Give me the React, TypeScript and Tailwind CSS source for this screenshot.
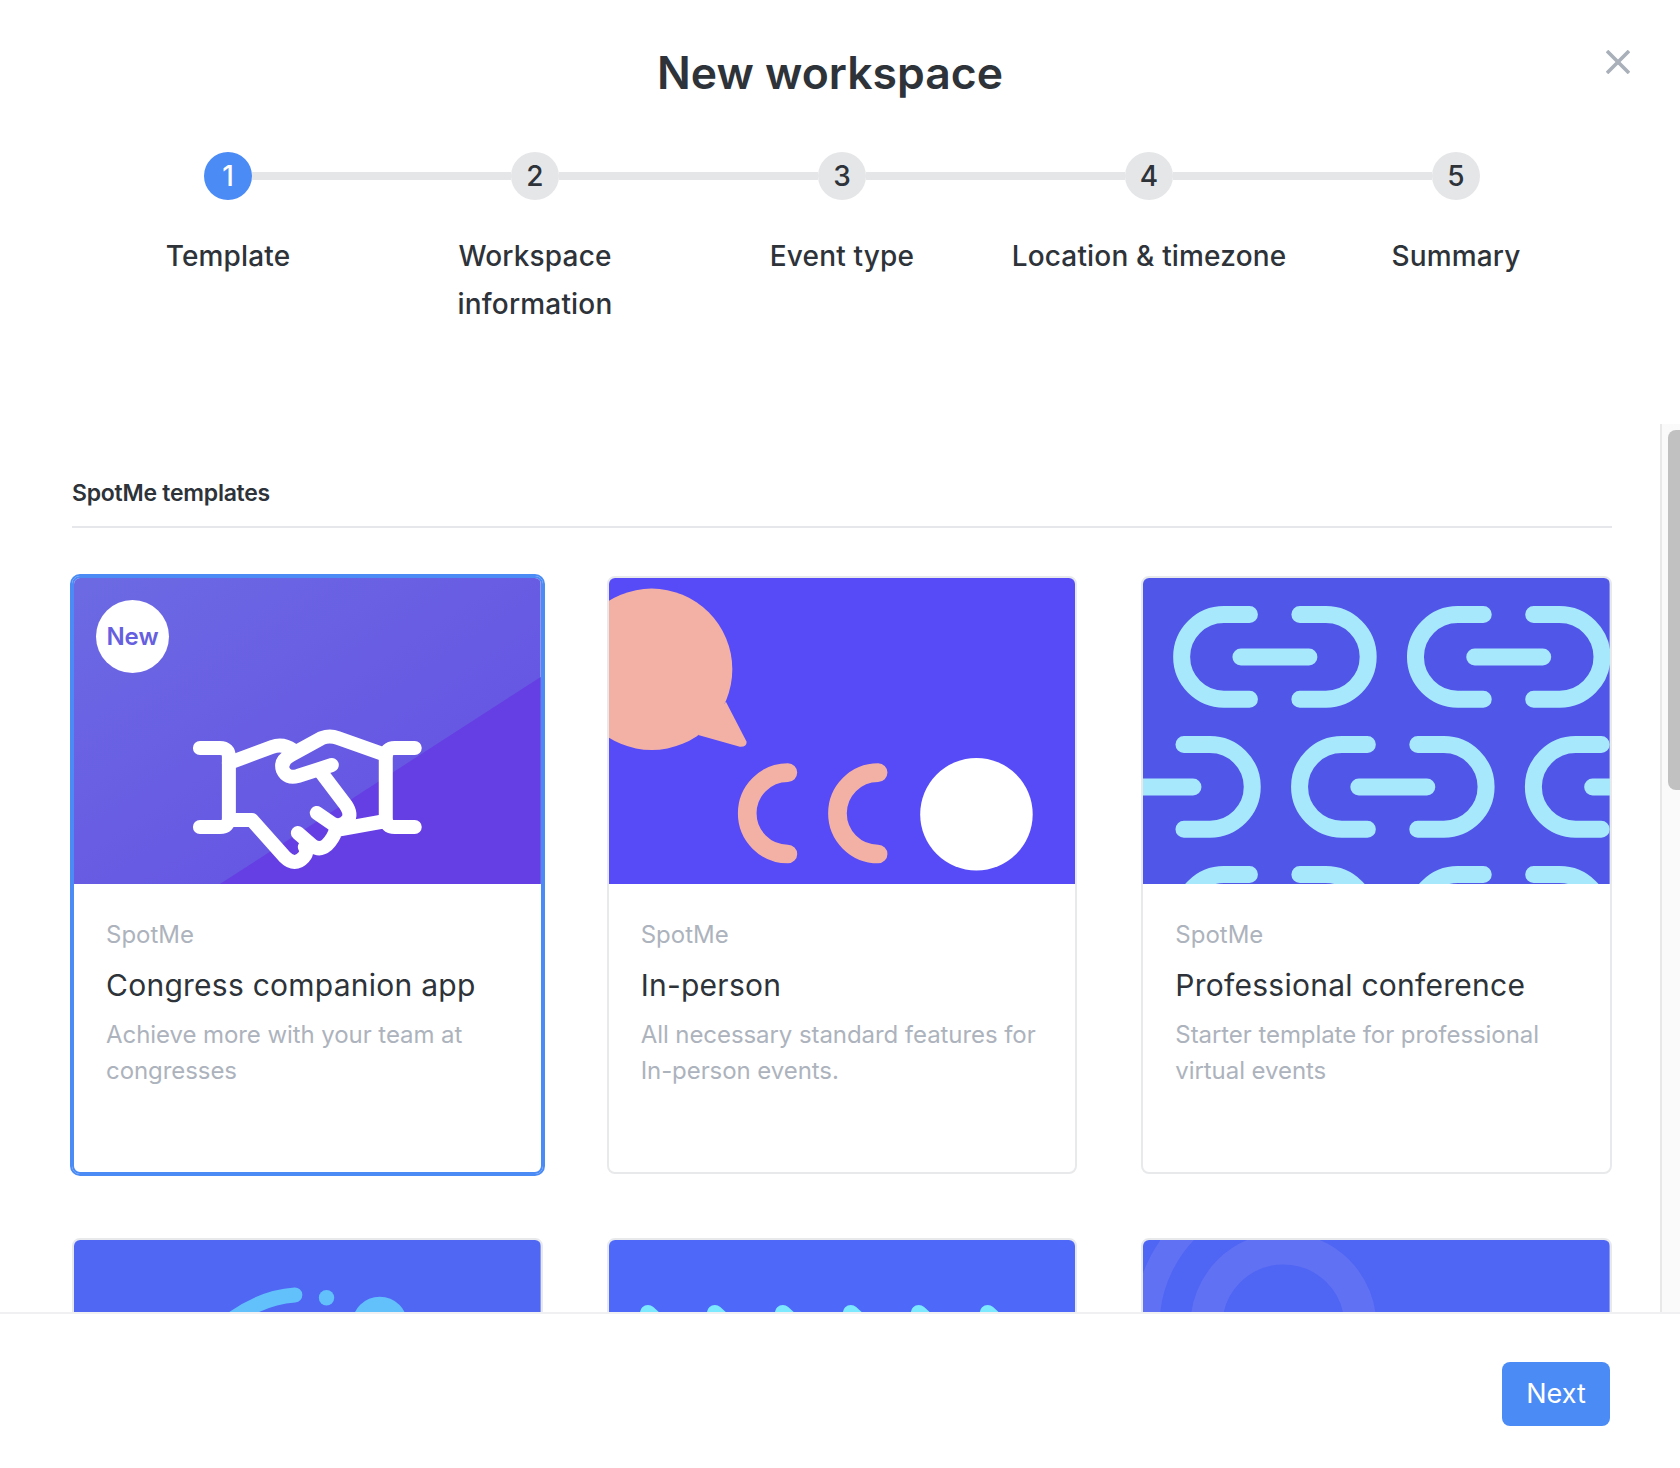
import type { ReactNode } from 'react';

const steps = [
  { n: 1, label: 'Template' },
  { n: 2, label: 'Workspace information' },
  { n: 3, label: 'Event type' },
  { n: 4, label: 'Location & timezone' },
  { n: 5, label: 'Summary' },
];

function Art({ children }: { children: ReactNode }) {
  return (
    <svg viewBox="0 0 467 306" className="block h-[306px] w-full" preserveAspectRatio="none">
      {children}
    </svg>
  );
}

function HandshakeArt() {
  return (
    <Art>
      <defs>
        <linearGradient id="hs" x1="0" y1="0" x2="1" y2="1">
          <stop offset="0" stopColor="#6c6ae3" />
          <stop offset="0.6" stopColor="#6759e3" />
          <stop offset="1" stopColor="#6652e2" />
        </linearGradient>
      </defs>
      <rect width="467" height="306" fill="url(#hs)" />
      <polygon points="146,306 467,99 467,306" fill="#653fe3" />
      <g transform="translate(106 132)" fill="none" stroke="#fff" strokeWidth="14" strokeLinecap="round" strokeLinejoin="round">
        <path d="M20 38H40Q49 38 49 47V108Q49 117 40 117H20" />
        <path d="M235 38H215Q206 38 206 47V108Q206 117 215 117H235" />
        <path d="M49 53L92 37Q103 33 113 40" />
        <path d="M206 45L158 28Q150 25 142 28L111 45Q100 51 103 60Q107 69 118 66L152 55" />
        <path d="M141 62L166 95Q172 104 168 110Q162 118 153 114L137 103" />
        <path d="M49 110H72L105 147Q115 157 124 147Q128 142 125 137" />
        <path d="M118 123L133 136Q140 141 147 135Q154 128 156 120L206 111" />
      </g>
    </Art>
  );
}

function BubbleArt() {
  return (
    <Art>
      <rect width="467" height="306" fill="#564bf6" />
      <circle cx="42.7" cy="91.3" r="80.7" fill="#f3b1a6" />
      <path d="M117 123.7L137.7 163.7Q138 169 131 168.7L89.3 157Z" fill="#f3b1a6" />
      <g fill="none" stroke="#f3b1a6" strokeWidth="18.7" strokeLinecap="round">
        <path d="M179 194.6A40.7 40.7 0 0 0 179 276" />
        <path d="M269.3 194.6A40.7 40.7 0 0 0 269.3 276" />
      </g>
      <circle cx="367.7" cy="236.3" r="56.3" fill="#fff" />
    </Art>
  );
}

function ChainLink({ x, y }: { x: number; y: number }) {
  return (
    <g transform={`translate(${x} ${y})`}>
      <path d="M106.5 36.5H81A42.3 42.3 0 0 0 81 121.2H106.5" />
      <path d="M157 36.5H183A42.3 42.3 0 0 1 183 121.2H157" />
      <path d="M98 79H166" />
    </g>
  );
}

function ChainArt() {
  return (
    <Art>
      <rect width="467" height="306" fill="#5057e8" />
      <g fill="none" stroke="#a8e8fd" strokeWidth="17" strokeLinecap="round">
        <ChainLink x={0} y={0} />
        <ChainLink x={234} y={0} />
        <ChainLink x={-116} y={130} />
        <ChainLink x={118} y={130} />
        <ChainLink x={352} y={130} />
        <ChainLink x={0} y={260} />
        <ChainLink x={234} y={260} />
      </g>
    </Art>
  );
}

function PlanetArt() {
  return (
    <Art>
      <rect width="467" height="306" fill="#4f67f3" />
      <path d="M221 55Q190 57 160 78L140 100" fill="none" stroke="#62c1fb" strokeWidth="15" strokeLinecap="round" strokeLinejoin="round" />
      <circle cx="252.7" cy="57.7" r="7.7" fill="#62c1fb" />
      <circle cx="306" cy="84.4" r="27.7" fill="#62c1fb" />
    </Art>
  );
}

function WavesArt() {
  const peaks = [39, 106, 174, 242, 310, 379];
  return (
    <Art>
      <rect width="467" height="306" fill="#4e69f9" />
      <g fill="none" stroke="#7ce9ff" strokeWidth="16" strokeLinecap="round" strokeLinejoin="round">
        {peaks.map((x) => (
          <path key={x} d={`M${x} 90V73L${x + 30} 100`} />
        ))}
      </g>
    </Art>
  );
}

function RingsArt() {
  return (
    <Art>
      <rect width="467" height="306" fill="#4f65f3" />
      <g fill="none" stroke="#6071f4">
        <circle cx="140.5" cy="85.5" r="77" strokeWidth="32" />
        <path d="M3.5 85.5A137 137 0 0 1 60 -25" strokeWidth="26" />
      </g>
    </Art>
  );
}

function TemplateCard({
  art,
  title,
  text,
  selected,
  badge,
}: {
  art: ReactNode;
  title?: string;
  text?: string;
  selected?: boolean;
  badge?: boolean;
}) {
  return (
    <div
      className={
        selected
          ? 'relative h-[598px] overflow-hidden rounded-lg border-2 border-[#4b8bf5] bg-white outline-2 outline-[#4b8bf5]'
          : 'relative h-[598px] overflow-hidden rounded-lg border-2 border-[#e8e9eb] bg-white'
      }
    >
      {art}
      {badge && (
        <span className="absolute left-[22px] top-[22px] flex h-[73px] w-[73px] items-center justify-center rounded-full bg-white text-2xl font-semibold text-[#6660e0]">
          New
        </span>
      )}
      {title && (
        <div className="px-8 pt-[33px]">
          <p className="text-2xl leading-9 text-[#adb3bd]">SpotMe</p>
          <h3 className="mt-2 text-[30px] leading-[48px] tracking-[0.25px] text-[#2d3339]">{title}</h3>
          <p className="mt-2 text-2xl leading-9 tracking-[-0.07px] text-[#adb3bd]">{text}</p>
        </div>
      )}
    </div>
  );
}

export default function App() {
  return (
    <div className="relative flex h-[1468px] w-full flex-col overflow-hidden bg-white font-['Inter',sans-serif] text-[#2d3339]">
      <button className="absolute right-[50px] top-[50px] text-[#a9b0b9]" aria-label="Close">
        <svg viewBox="0 0 24 24" className="h-6 w-6" fill="none" stroke="currentColor" strokeWidth="3.6">
          <path d="M1 1L23 23M23 1L1 23" />
        </svg>
      </button>

      <header className="h-[424px] shrink-0">
        <h1 className="pr-5 pt-[41px] text-center text-[44.5px] font-semibold leading-16">New workspace</h1>

        {/* Stepper */}
        <div className="mt-[47px] flex items-center pl-[204px] pr-[200px]">
          {steps.map((step, i) => (
            <div key={step.n} className={i < 4 ? 'flex flex-1 items-center' : 'flex items-center'}>
              <span
                className={
                  step.n === 1
                    ? 'flex h-12 w-12 shrink-0 items-center justify-center rounded-full bg-[#4b8bf5] text-[28px] font-medium text-white'
                    : 'flex h-12 w-12 shrink-0 items-center justify-center rounded-full bg-[#e5e6e8] text-[28px] font-medium'
                }
              >
                {step.n}
              </span>
              {i < 4 && <span className="h-2 flex-1 bg-[#e5e6e8]" />}
            </div>
          ))}
        </div>
        <div className="ml-[74.5px] mt-8 grid w-[1535px] grid-cols-5">
          {steps.map((step) => (
            <p key={step.n} className="mx-auto max-w-[280px] text-center text-[28px] font-medium leading-12 tracking-[0.17px]">
              {step.label}
            </p>
          ))}
        </div>
      </header>

      <main className="flex min-h-0 flex-1">
        <div className="min-w-0 flex-1 overflow-hidden pl-[72px] pr-12 pt-[51px]">
          <h2 className="border-b-2 border-[#e5e7eb] pb-[15px] text-[23px] font-semibold leading-9 tracking-[-0.25px]">SpotMe templates</h2>
          <div className="mt-12 grid grid-cols-3 gap-16">
            <TemplateCard
              selected
              badge
              art={<HandshakeArt />}
              title="Congress companion app"
              text="Achieve more with your team at congresses"
            />
            <TemplateCard
              art={<BubbleArt />}
              title="In-person"
              text="All necessary standard features for In-person events."
            />
            <TemplateCard
              art={<ChainArt />}
              title="Professional conference"
              text="Starter template for professional virtual events"
            />
            <TemplateCard art={<PlanetArt />} />
            <TemplateCard art={<WavesArt />} />
            <TemplateCard art={<RingsArt />} />
          </div>
        </div>
        {/* Scrollbar */}
        <div className="w-5 shrink-0 border-l-2 border-[#e8e8e8] bg-[#fafafa] pl-[6px] pt-[6px]">
          <div className="h-[360px] rounded-l-lg bg-[#c1c1c1]" />
        </div>
      </main>

      <footer className="flex h-[156px] shrink-0 justify-end border-t-2 border-[#f0f0f2] pr-[70px] pt-12">
        <button className="h-16 w-[108px] rounded-lg bg-[#4b8bf5] text-[27px] text-white">Next</button>
      </footer>
    </div>
  );
}
